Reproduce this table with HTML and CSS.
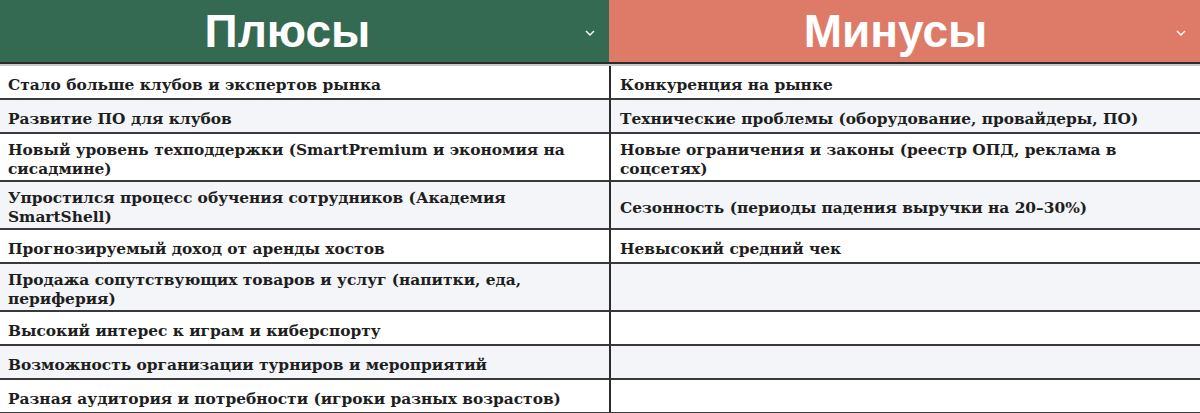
FILE: index.html
```html
<!DOCTYPE html>
<html lang="ru">
<head>
<meta charset="utf-8">
<link rel="stylesheet" href="styles.css">
<title>Плюсы и минусы</title>
</head>
<body>
<div class="table">
  <div class="head head-plus">
    <span class="head-title">Плюсы</span>
    <svg class="chev" viewBox="0 0 10 6" width="10" height="6"><polyline points="1,1 5,5 9,1" fill="none" stroke="#fff" stroke-width="1.4"/></svg>
  </div>
  <div class="head head-minus">
    <span class="head-title">Минусы</span>
    <svg class="chev" viewBox="0 0 10 6" width="10" height="6"><polyline points="1,1 5,5 9,1" fill="none" stroke="#fff" stroke-width="1.4"/></svg>
  </div>
  <div class="sep"></div>

  <div class="cell">Стало больше клубов и экспертов рынка</div>
  <div class="cell right">Конкуренция на рынке</div>

  <div class="cell alt">Развитие ПО для клубов</div>
  <div class="cell alt right">Технические проблемы (оборудование, провайдеры, ПО)</div>

  <div class="cell">Новый уровень техподдержки (SmartPremium и экономия на сисадмине)</div>
  <div class="cell right">Новые ограничения и законы (реестр ОПД, реклама в соцсетях)</div>

  <div class="cell alt">Упростился процесс обучения сотрудников (Академия SmartShell)</div>
  <div class="cell alt right">Сезонность (периоды падения выручки на 20–30%)</div>

  <div class="cell">Прогнозируемый доход от аренды хостов</div>
  <div class="cell right">Невысокий средний чек</div>

  <div class="cell alt">Продажа сопутствующих товаров и услуг (напитки, еда, периферия)</div>
  <div class="cell alt right"></div>

  <div class="cell">Высокий интерес к играм и киберспорту</div>
  <div class="cell right"></div>

  <div class="cell alt">Возможность организации турниров и мероприятий</div>
  <div class="cell alt right"></div>

  <div class="cell">Разная аудитория и потребности (игроки разных возрастов)</div>
  <div class="cell right"></div>
</div>
</body>
</html>
```

FILE: styles.css
```css
html, body {
  margin: 0;
  padding: 0;
  background: #ffffff;
  overflow: hidden;
}

.table {
  display: grid;
  grid-template-columns: 609px 1fr;
  width: 1200px;
}

.head {
  height: 62px;
  display: flex;
  align-items: center;
  color: #ffffff;
  font-family: "Liberation Sans", Arial, sans-serif;
  font-weight: bold;
  font-size: 46px;
}

.head-plus {
  background: #356a52;
}

.head-minus {
  background: #de7b68;
  border-left: 2px solid #de7b68;
}

.head-title {
  flex: 1;
  text-align: center;
  padding-right: 10px;
  line-height: 62px;
}

.head-minus .head-title {
  padding-right: 0;
  padding-left: 4px;
}

.chev {
  margin-right: 14px;
  margin-top: 3px;
}

.sep {
  grid-column: 1 / 3;
  height: 2px;
  background: #2b2b2b;
  border-bottom: 2px solid #c9c9c9;
}

.cell {
  min-height: 34px;
  box-sizing: border-box;
  display: flex;
  align-items: center;
  padding: 7px 8px 1px 8px;
  border-bottom: 2px solid #3a3a3a;
  background: #ffffff;
  color: #1e1e1e;
  font-family: "DejaVu Serif", "Liberation Serif", serif;
  font-weight: bold;
  font-size: 15.4px;
  line-height: 19px;
}

.cell.alt {
  background: #f3f5f8;
}

.cell.right {
  border-left: 2px solid #2b2b2b;
  padding-left: 9px;
}
```
